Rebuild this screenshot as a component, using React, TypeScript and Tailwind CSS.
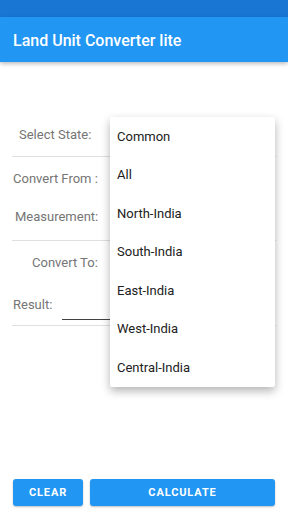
import React from "react";

const items = ["Common", "All", "North-India", "South-India", "East-India", "West-India", "Central-India"];

export default function App() {
  return (
    <div className="relative flex flex-col h-[512px] w-[288px] bg-white overflow-hidden" style={{ fontFamily: "Roboto, 'Noto Sans', sans-serif" }}>
      <div className="h-[17px] bg-[#1976d2]" />
      <div className="h-[45px] bg-[#2196f3] flex items-center px-[13px] pt-[3px] shadow-[0_2px_4px_rgba(0,0,0,0.25)] relative z-10">
        <span className="text-white text-[16px] font-medium">Land Unit Converter lite</span>
      </div>
      <div className="px-3 text-[13px] text-[#757575]">
        <div className="h-[52px]" />
        <div className="h-[42px] flex items-center pl-[7px]">Select State:</div>
        <div className="h-px bg-[#e0e0e0]" />
        <div className="h-[44px] flex items-center pl-[1px]">Convert From :</div>
        <div className="h-[32px] flex items-center pl-[3px]">Measurement:</div>
        <div className="h-[7px]" />
        <div className="h-px bg-[#e0e0e0]" />
        <div className="h-[44px] flex items-center pl-[20px]">Convert To:</div>
        <div className="h-[40px] flex items-center pl-[1px]">
          <span>Result:</span>
          <div className="ml-[10px] w-[120px] h-[16px] mt-[14px] border-b border-[#424242]" />
        </div>
        <div className="h-px bg-[#e0e0e0]" />
      </div>
      <div className="mt-auto flex gap-[7px] px-[13px] pb-[6px]">
        <button className="w-[70px] h-[27px] rounded-[3px] bg-[#2196f3] text-white text-[11px] font-bold tracking-[0.08em] pt-[2px] shadow-[0_1px_2px_rgba(0,0,0,0.25)]">CLEAR</button>
        <button className="flex-1 h-[27px] rounded-[3px] bg-[#2196f3] text-white text-[11px] font-bold tracking-[0.08em] pt-[2px] shadow-[0_1px_2px_rgba(0,0,0,0.25)]">CALCULATE</button>
      </div>
      <div className="absolute left-[110px] top-[117px] w-[165px] bg-white rounded-[2px] shadow-[0_4px_10px_rgba(0,0,0,0.3)] z-20">
        {items.map((t) => (
          <div key={t} className="h-[38.5px] flex items-center pl-[7px] text-[13px] text-[#212121]">{t}</div>
        ))}
      </div>
    </div>
  );
}
